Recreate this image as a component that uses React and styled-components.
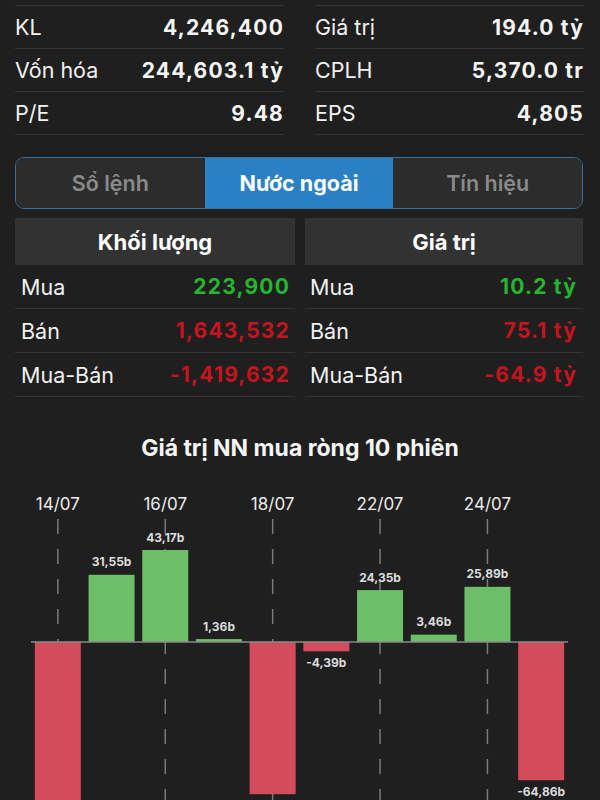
import React from 'react';
import styled, { createGlobalStyle } from 'styled-components';

const GlobalStyle = createGlobalStyle`
  html, body {
    margin: 0;
    padding: 0;
    background: #1f1f1f;
    overflow: hidden;
  }
  body {
    font-family: Inter, "Noto Sans", "Liberation Sans", sans-serif;
    color: #f4f4f4;
  }
`;

const Page = styled.div`
  width: 600px;
  height: 800px;
  overflow: hidden;
`;

const Section = styled.div`
  padding: 0 16px 0 15px;
`;

const StatsGrid = styled.div`
  display: grid;
  grid-template-columns: 1fr 1fr;
  column-gap: 31px;
  padding-top: 5px;
`;

const StatColumn = styled.div`
  border-top: 1px solid #353535;
`;

const StatRow = styled.div`
  display: flex;
  align-items: center;
  justify-content: space-between;
  height: 42px;
  border-bottom: 1px solid #353535;
`;

const Label = styled.span`
  font-size: 21.5px;
  font-weight: 400;
  color: #f2f2f2;
`;

const Value = styled.span`
  font-size: 21px;
  font-weight: 700;
  letter-spacing: 1.2px;
  color: ${({ tone }) =>
    tone === 'up' ? '#27b52d' : tone === 'down' ? '#c5141d' : '#f6f6f6'};
`;

const Tabs = styled.div`
  display: grid;
  grid-template-columns: repeat(3, 1fr);
  height: 50px;
  margin: 22px 1px 0 0;
  border: 1.5px solid #3c6f99;
  border-radius: 9px;
  overflow: hidden;
`;

const Tab = styled.div`
  display: flex;
  align-items: center;
  justify-content: center;
  font-size: 21.5px;
  font-weight: ${({ active }) => (active ? 700 : 600)};
  color: ${({ active }) => (active ? '#ffffff' : '#8a8a8a')};
  background: ${({ active }) => (active ? '#2b80c3' : '#2c2c2c')};
`;

const Panels = styled.div`
  display: grid;
  grid-template-columns: 280px 1fr;
  column-gap: 10px;
  margin: 9px 1px 0 0;
`;

const PanelHeader = styled.div`
  display: flex;
  align-items: center;
  justify-content: center;
  height: 47px;
  background: #323232;
  font-size: 22px;
  font-weight: 700;
  color: #ffffff;
`;

const PanelRow = styled.div`
  display: flex;
  align-items: center;
  justify-content: space-between;
  height: 43px;
  padding: 0 ${({ side }) => (side === 'right' ? '6px 0 5px' : '5px 0 6px')};
  border-bottom: 1px solid #353535;
`;

const ChartTitle = styled.h3`
  margin: 38px 0 0;
  text-align: center;
  font-size: 23px;
  font-weight: 700;
  line-height: 26px;
  color: #f6f6f6;
`;

const ChartSvg = styled.svg`
  display: block;
  margin-top: 20px;
`;

const stats = [
  [
    ['KL', '4,246,400'],
    ['Vốn hóa', '244,603.1 tỷ'],
    ['P/E', '9.48'],
  ],
  [
    ['Giá trị', '194.0 tỷ'],
    ['CPLH', '5,370.0 tr'],
    ['EPS', '4,805'],
  ],
];

const panels = [
  {
    title: 'Khối lượng',
    side: 'left',
    rows: [
      ['Mua', '223,900', 'up'],
      ['Bán', '1,643,532', 'down'],
      ['Mua-Bán', '-1,419,632', 'down'],
    ],
  },
  {
    title: 'Giá trị',
    side: 'right',
    rows: [
      ['Mua', '10.2 tỷ', 'up'],
      ['Bán', '75.1 tỷ', 'down'],
      ['Mua-Bán', '-64.9 tỷ', 'down'],
    ],
  },
];

const sessions = [
  { date: '14/07', value: -90.2 },
  { date: '15/07', value: 31.55 },
  { date: '16/07', value: 43.17 },
  { date: '17/07', value: 1.36 },
  { date: '18/07', value: -71.44 },
  { date: '21/07', value: -4.39 },
  { date: '22/07', value: 24.35 },
  { date: '23/07', value: 3.46 },
  { date: '24/07', value: 25.89 },
  { date: '25/07', value: -64.86 },
];

const CHART_H = 340;
const CHART_LEFT = 31;
const SLOT = 53.7;
const BAR = 46;
const ZERO = 161;
const SCALE = 2.13;

const fmt = v => `${v.toFixed(2).replace('.', ',')}b`;

// labels of the deepest bars fall below the fold, so they are left out
const NetChart = () => (
  <ChartSvg width="600" height={CHART_H} viewBox={`0 0 600 ${CHART_H}`}>
    {sessions.map((s, i) => {
      const cx = CHART_LEFT + SLOT * (i + 0.5);
      if (i % 2) return null;
      return (
        <g key={s.date}>
          <text
            x={cx}
            y="29"
            textAnchor="middle"
            fontSize="17"
            fill="#ececec"
            fontFamily="Inter, sans-serif"
          >
            {s.date}
          </text>
          <line
            x1={cx}
            x2={cx}
            y1="38"
            y2={CHART_H}
            stroke="#7a7a7a"
            strokeWidth="1.5"
            strokeDasharray="15 15"
          />
        </g>
      );
    })}
    {sessions.map((s, i) => {
      const cx = CHART_LEFT + SLOT * (i + 0.5);
      const h = Math.abs(s.value) * SCALE;
      const up = s.value >= 0;
      const labelY = up ? ZERO - h - 8.5 : ZERO + h + 15.5;
      return (
        <g key={`bar-${s.date}`}>
          <rect
            x={cx - BAR / 2}
            y={up ? ZERO - h : ZERO}
            width={BAR}
            height={h}
            fill={up ? '#6dbf67' : '#d44b5b'}
          />
          {labelY < 318 && (
            <text
              x={cx}
              y={labelY}
              textAnchor="middle"
              fontSize="12"
              fontWeight="700"
              fill="#dcdcdc"
              fontFamily="Inter, sans-serif"
            >
              {fmt(s.value)}
            </text>
          )}
        </g>
      );
    })}
    <line x1={CHART_LEFT} x2="568" y1={ZERO} y2={ZERO} stroke="#8a8a8a" strokeWidth="1.5" />
  </ChartSvg>
);

const App = () => (
  <Page>
    <GlobalStyle />
    <Section>
      <StatsGrid>
        {stats.map((col, c) => (
          <StatColumn key={c}>
            {col.map(([label, value]) => (
              <StatRow key={label}>
                <Label>{label}</Label>
                <Value>{value}</Value>
              </StatRow>
            ))}
          </StatColumn>
        ))}
      </StatsGrid>
      <Tabs>
        <Tab>Sổ lệnh</Tab>
        <Tab active>Nước ngoài</Tab>
        <Tab>Tín hiệu</Tab>
      </Tabs>
      <Panels>
        {panels.map(panel => (
          <div key={panel.title}>
            <PanelHeader>{panel.title}</PanelHeader>
            {panel.rows.map(([label, value, tone]) => (
              <PanelRow key={label} side={panel.side}>
                <Label>{label}</Label>
                <Value tone={tone}>{value}</Value>
              </PanelRow>
            ))}
          </div>
        ))}
      </Panels>
    </Section>
    <ChartTitle>Giá trị NN mua ròng 10 phiên</ChartTitle>
    <NetChart />
  </Page>
);

export default App;
